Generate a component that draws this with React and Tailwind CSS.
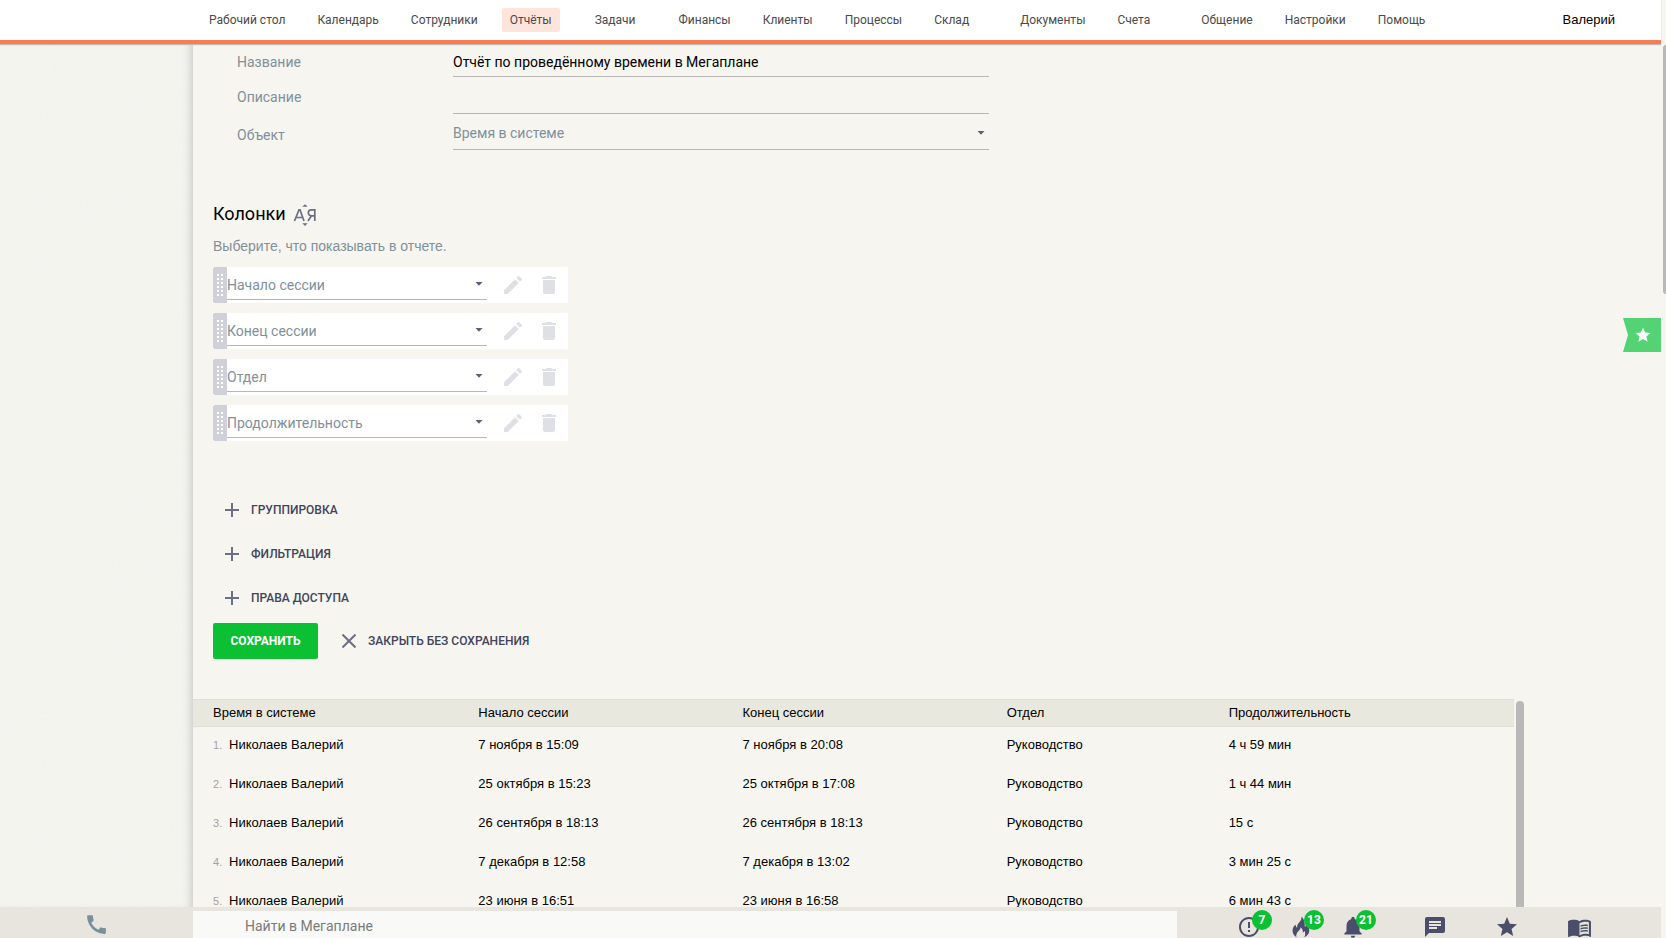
import { MdCall, MdChat, MdDelete, MdEdit, MdErrorOutline, MdMenuBook, MdNotifications, MdStar } from 'react-icons/md'

const nav = [
  { label: 'Рабочий стол' },
  { label: 'Календарь' },
  { label: 'Сотрудники' },
  { label: 'Отчёты', active: true, counter: 'mr-[11px]' },
  { label: 'Задачи', counter: 'mr-[11px]' },
  { label: 'Финансы' },
  { label: 'Клиенты' },
  { label: 'Процессы' },
  { label: 'Склад', counter: 'mr-[19px]' },
  { label: 'Документы' },
  { label: 'Счета', counter: 'mr-[19px]' },
  { label: 'Общение' },
  { label: 'Настройки' },
  { label: 'Помощь' },
]

const columns = ['Начало сессии', 'Конец сессии', 'Отдел', 'Продолжительность']

const rows = [
  ['7 ноября в 15:09', '7 ноября в 20:08', '4 ч 59 мин'],
  ['25 октября в 15:23', '25 октября в 17:08', '1 ч 44 мин'],
  ['26 сентября в 18:13', '26 сентября в 18:13', '15 с'],
  ['7 декабря в 12:58', '7 декабря в 13:02', '3 мин 25 с'],
  ['23 июня в 16:51', '23 июня в 16:58', '6 мин 43 с'],
]

function Select({ id, label, value, className }) {
  return (
    <div className={'relative border-b border-[#b7b8b5] ' + className}>
      <select id={id} aria-label={label} className="block h-full w-full appearance-none bg-transparent pt-[3px] text-sm text-[#80909b] outline-none">
        <option>{value}</option>
      </select>
      <div className="pointer-events-none absolute inset-y-0 right-1 flex items-center pt-[2px]">
        <svg className="h-1 w-2" viewBox="0 0 8 4" fill="#5b5f7b" aria-hidden="true">
          <path d="M.5 0h7L4 3.800z" />
        </svg>
      </div>
    </div>
  )
}

function SortIcon() {
  return (
    <svg width="24" height="24" viewBox="0 0 24 24" fill="none" stroke="#6c6e83" strokeWidth="1.7" aria-hidden="true">
      <path d="M1.500 18 6 6.800h1L11 18M3.200 14.500h6.600" />
      <path d="M21.800 18V6.800h-3.500a3 3 0 0 0 0 6H21.800M18.300 13l-3.300 5" />
      <path d="M9.300 3.800 12 1.200l2.700 2.600zM9.300 20.300 12 22.900l2.700-2.600z" fill="#6c6e83" stroke="none" />
    </svg>
  )
}

function FireIcon() {
  return (
    <svg width="20" height="22" viewBox="0 0 20 22" fill="#4b4e6b" aria-hidden="true">
      <path d="M10.500 0.500C11 4 8.200 6 6.700 8.500 6 9.700 6 11 6.300 12 5.200 11.200 4.600 10 4.600 8.500 2.300 10.500 1.300 13 1.600 15.600 1.900 18 3.200 20 5.400 21.300 4.800 18.500 5.800 16.400 8 14.400 9 13.500 9.600 12.400 9.600 11.200 11.500 13 12.200 14.700 11.800 16.600 12.700 16.200 13.200 15.600 13.500 14.700 14.600 17 14.400 19.300 13.300 21.300 16.600 19.800 18.400 17.300 18.300 14.300 18.200 11.700 16.600 9.600 14.900 7.900 15 9.300 14.700 10.300 13.900 11.100 13.800 6.500 13.200 3 10.500 0.500z" />
    </svg>
  )
}

function AddButton({ children }) {
  return (
    <button type="button" className="flex h-11 items-center gap-3 text-[12px] font-medium text-[#42445c]">
      <svg width="14" height="14" viewBox="0 0 14 14" stroke="#6c6e83" strokeWidth="2" aria-hidden="true">
        <path d="M7 0v14M0 7h14" />
      </svg>
      {children}
    </button>
  )
}

function FooterButton({ label, badge, children, className }) {
  return (
    <button aria-label={label} className={'relative flex h-6 items-center justify-center text-[#4b4e6b] ' + className}>
      {children}
      {badge && (
        <span className="absolute left-1/2 -top-[5px] ml-[3px] flex size-5 items-center justify-center rounded-full bg-[#0bc033] text-[12px] font-bold text-white">
          {badge}
        </span>
      )}
    </button>
  )
}

export default function App() {
  return (
    <div className="flex h-screen overflow-hidden bg-[#f6f5f0] font-[Roboto,sans-serif] text-black">
      <div className="relative flex min-w-0 flex-1 flex-col">
        <header className="z-10 flex h-11 shrink-0 items-center border-b-4 border-[#ff7a50] bg-white pl-[201px] pr-[46px] shadow-[0_1px_1px_#bdbdb8]">
          <nav className="flex gap-4 text-[12px] text-[#4a4a4a]">
            {nav.map((item) => (
              <a
                key={item.label}
                href="#"
                className={'flex h-6 items-center rounded-xs px-2 whitespace-nowrap ' + (item.active ? 'bg-[#ffe4dc] ' : '') + (item.counter || '')}
              >
                {item.label}
              </a>
            ))}
          </nav>
          <a href="#" className="ml-auto font-['Liberation_Sans',sans-serif] text-[13px]">Валерий</a>
        </header>

        <div className="flex min-h-0 flex-1">
          <aside className="relative w-[193px] shrink-0 bg-[#f5f5f0] shadow-[inset_-8px_0_8px_-6px_#c9cac6]">
            <svg className="absolute inset-0 size-full opacity-5" aria-hidden="true">
              <filter id="paper">
                <feTurbulence type="fractalNoise" baseFrequency="0.6" numOctaves="2" />
                <feColorMatrix type="saturate" values="0.4" />
              </filter>
              <rect width="100%" height="100%" filter="url(#paper)" />
            </svg>
          </aside>
          <main className="flex min-w-0 flex-1 flex-col overflow-hidden">
            <form className="ml-5 flex shrink-0 flex-col items-start">
              <div className="ml-6 flex flex-col text-sm">
                <div className="flex h-[33px] items-center">
                  <label htmlFor="name" className="w-[216px] pt-[3px] text-[#80909b]">Название</label>
                  <input id="name" defaultValue="Отчёт по проведённому времени в Мегаплане" className="h-full w-[536px] border-b border-[#b7b8b5] bg-transparent pt-[3px] outline-none" />
                </div>
                <div className="flex h-[37px] items-center">
                  <label htmlFor="description" className="w-[216px] pt-[3px] text-[#80909b]">Описание</label>
                  <input id="description" className="h-full w-[536px] border-b border-[#b7b8b5] bg-transparent pt-[3px] outline-none" />
                </div>
                <div className="flex h-9 items-center">
                  <label htmlFor="object" className="w-[216px] pt-[5px] text-[#80909b]">Объект</label>
                  <Select id="object" value="Время в системе" className="h-full w-[536px]" />
                </div>
              </div>

              <div className="mt-[53px] flex h-6 items-center gap-[7px]">
                <h2 className="pb-[2px] text-[18px] leading-6">Колонки</h2>
                <button type="button" aria-label="Сортировать по алфавиту"><SortIcon /></button>
              </div>
              <p className="mt-[9px] font-['Liberation_Sans',sans-serif] text-sm leading-5 text-[#80909b]">Выберите, что показывать в отчете.</p>

              <ul className="mt-[11px] flex flex-col gap-[10px]">
                {columns.map((c) => (
                  <li key={c} className="flex h-9 w-[355px] bg-white">
                    <span className="flex w-[14px] items-center justify-center rounded-l-xs bg-[#cfd0d8]">
                      <svg width="6" height="23" viewBox="0 0 6 23" fill="#fff" aria-hidden="true">
                        {[0, 1, 2, 3, 4, 5].map((i) => (
                          <path key={i} d={`M0 ${i * 4}h2v2h-2zM4 ${i * 4}h2v2h-2z`} />
                        ))}
                      </svg>
                    </span>
                    <Select label={c} value={c} className="h-[33px] w-[260px]" />
                    <button type="button" aria-label="Изменить" className="ml-[14px] text-[#dfe0e5]"><MdEdit size={24} /></button>
                    <button type="button" aria-label="Удалить" className="ml-3 text-[#dfe0e5]"><MdDelete size={24} /></button>
                  </li>
                ))}
              </ul>

              <div className="mt-[47px] ml-3 flex flex-col items-start">
                <AddButton>ГРУППИРОВКА</AddButton>
                <AddButton>ФИЛЬТРАЦИЯ</AddButton>
                <AddButton>ПРАВА ДОСТУПА</AddButton>
              </div>

              <div className="mt-[3px] flex h-9 items-center gap-6">
                <button type="button" className="h-9 min-w-[105px] rounded-xs bg-[#0bc033] px-4 text-[12px] font-bold text-white">СОХРАНИТЬ</button>
                <button type="button" className="flex items-center gap-3 text-[12px] font-medium text-[#42445c]">
                  <svg width="14" height="14" viewBox="0 0 14 14" stroke="#6c6e83" strokeWidth="2" aria-hidden="true">
                    <path d="M.5.5l13 13M13.500.5l-13 13" />
                  </svg>
                  ЗАКРЫТЬ БЕЗ СОХРАНЕНИЯ
                </button>
              </div>
            </form>

            <div className="mt-10 mr-[137px] flex min-h-0 flex-1 items-start overflow-hidden">
              <table className="min-w-0 flex-1 table-fixed border-collapse font-['Liberation_Sans',sans-serif] text-[13px]">
                <colgroup>
                  <col className="w-[21.600%]" />
                  <col className="w-[20%]" />
                  <col className="w-[20%]" />
                  <col className="w-[16.800%]" />
                  <col />
                </colgroup>
                <thead>
                  <tr className="h-[27px] border-y border-[#dfdfd6] bg-[#e8e8df] text-left">
                    <th className="pl-5 font-normal">Время в системе</th>
                    <th className="font-normal">Начало сессии</th>
                    <th className="font-normal">Конец сессии</th>
                    <th className="font-normal">Отдел</th>
                    <th className="font-normal">Продолжительность</th>
                  </tr>
                </thead>
                <tbody>
                  {rows.map(([start, end, duration], i) => (
                    <tr key={i} className="h-[39px]">
                      <td className="pb-[3px] pl-5">
                        <span className="inline-block w-4 text-[11px] text-[#a3a3a3]">{i + 1}.</span>
                        Николаев Валерий
                      </td>
                      <td className="pb-[3px]">{start}</td>
                      <td className="pb-[3px]">{end}</td>
                      <td className="pb-[3px]">Руководство</td>
                      <td className="pb-[3px]">{duration}</td>
                    </tr>
                  ))}
                </tbody>
              </table>
              <div className="mt-[2px] ml-[2px] h-full w-2 shrink-0 rounded-t-full bg-[#b9b9b9]" />
            </div>
          </main>
        </div>

        <footer className="flex h-[31px] shrink-0 overflow-hidden bg-[#e8e5de]">
          <button aria-label="Телефония" className="flex w-[193px] shrink-0 items-start justify-center pt-[5px] text-[#78909c]">
            <MdCall size={25} />
          </button>
          <input
            aria-label="Поиск"
            placeholder="Найти в Мегаплане"
            className="mt-1 min-w-0 flex-1 bg-[#f9f9f8] px-[52px] pt-[3px] text-sm outline-none placeholder:text-[#7b7b7b]"
          />
          <div className="flex shrink-0 items-start pt-2 pr-[46px] pl-[46px]">
            <FooterButton label="Важное" badge="7" className="w-[52px]"><MdErrorOutline size={24} /></FooterButton>
            <FooterButton label="Горящее" badge="13" className="w-[52px]"><FireIcon /></FooterButton>
            <FooterButton label="Уведомления" badge="21" className="w-[52px]"><MdNotifications size={26} /></FooterButton>
            <FooterButton label="Сообщения" className="ml-5 w-[72px]"><MdChat size={24} /></FooterButton>
            <FooterButton label="Избранное" className="w-[72px]"><MdStar size={24} /></FooterButton>
            <FooterButton label="Справка" className="w-[72px]"><MdMenuBook size={25} /></FooterButton>
          </div>
        </footer>

        <button aria-label="Добавить в избранное" className="absolute top-[318px] right-0 h-[34px] w-[38px] text-white">
          <svg className="absolute inset-0" width="38" height="34" viewBox="0 0 38 34" fill="#53d373" aria-hidden="true">
            <path d="M0 0h38v34H0l5-17z" />
          </svg>
          <MdStar size={18} className="relative ml-[11px]" />
        </button>
      </div>
      <div className="w-[5px] shrink-0 pt-[45px]">
        <div className="ml-auto h-[249px] w-[3px] rounded-l-full bg-[#b9b9b9]" />
      </div>
    </div>
  )
}
